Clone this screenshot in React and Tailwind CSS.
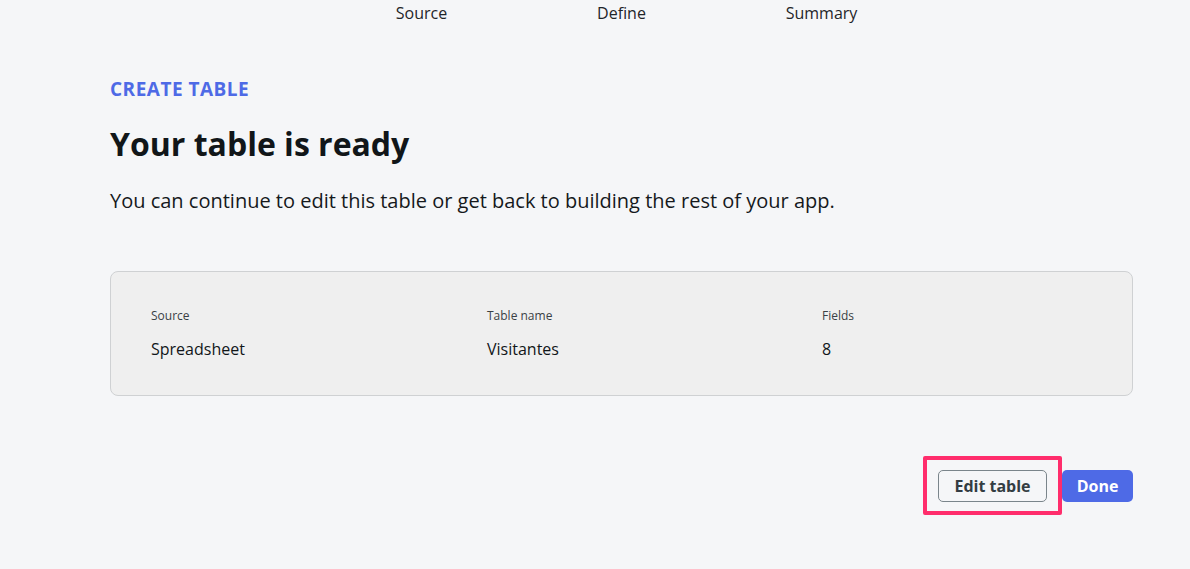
import React from "react";

const steps = ["Source", "Define", "Summary"];

const details = [
  { label: "Source", value: "Spreadsheet" },
  { label: "Table name", value: "Visitantes" },
  { label: "Fields", value: "8" },
];

export default function App() {
  return (
    <div
      className="min-h-[569px] w-full bg-[#f5f6f8] text-[#15191c]"
      style={{ fontFamily: '"Open Sans", "Noto Sans", sans-serif' }}
    >
      <div className="pl-[110px] pr-[57px]">
        {/* Steps */}
        <div className="flex justify-center">
          {steps.map((s) => (
            <div key={s} className="w-[200px] pt-[2px] text-center text-[16px] leading-[22px] text-[#1f2529]">
              {s}
            </div>
          ))}
        </div>

        <div className="mt-[53px] text-[19px] font-bold leading-[24px] tracking-[0.5px] text-[#4e6ae6]">
          CREATE TABLE
        </div>
        <h1 className="mt-[23px] text-[32px] font-bold leading-[40px] text-[#111619]">
          Your table is ready
        </h1>
        <p className="mt-[23px] text-[20px] leading-[28px] text-[#15191c]">
          You can continue to edit this table or get back to building the rest of your app.
        </p>

        {/* Summary card */}
        <div className="mt-[56px] grid h-[125px] grid-cols-[336px_335px_1fr] rounded-[8px] border border-[#cfd1d3] bg-[#efefef] pl-[40px] pt-[35px]">
          {details.map((d) => (
            <div key={d.label}>
              <div className="text-[12px] leading-[18px] text-[#3a4145]">{d.label}</div>
              <div className="mt-[13px] text-[16px] leading-[22px] text-[#111619]">{d.value}</div>
            </div>
          ))}
        </div>

        {/* Actions */}
        <div className="mt-[74px] flex justify-end gap-[15px]">
          <div className="relative">
            <button className="h-[32px] w-[109px] rounded-[5px] border border-[#7a858b] bg-[#f5f6f8] text-[16px] font-bold text-[#333d43]">
              Edit table
            </button>
            <div className="pointer-events-none absolute -left-[15px] -top-[14px] h-[59px] w-[139px] rounded-[2px] border-[4px] border-[#ff2d6c]" />
          </div>
          <button className="h-[32px] w-[71px] rounded-[5px] bg-[#4e6ae6] text-[16px] font-bold text-white">
            Done
          </button>
        </div>
      </div>
    </div>
  );
}
